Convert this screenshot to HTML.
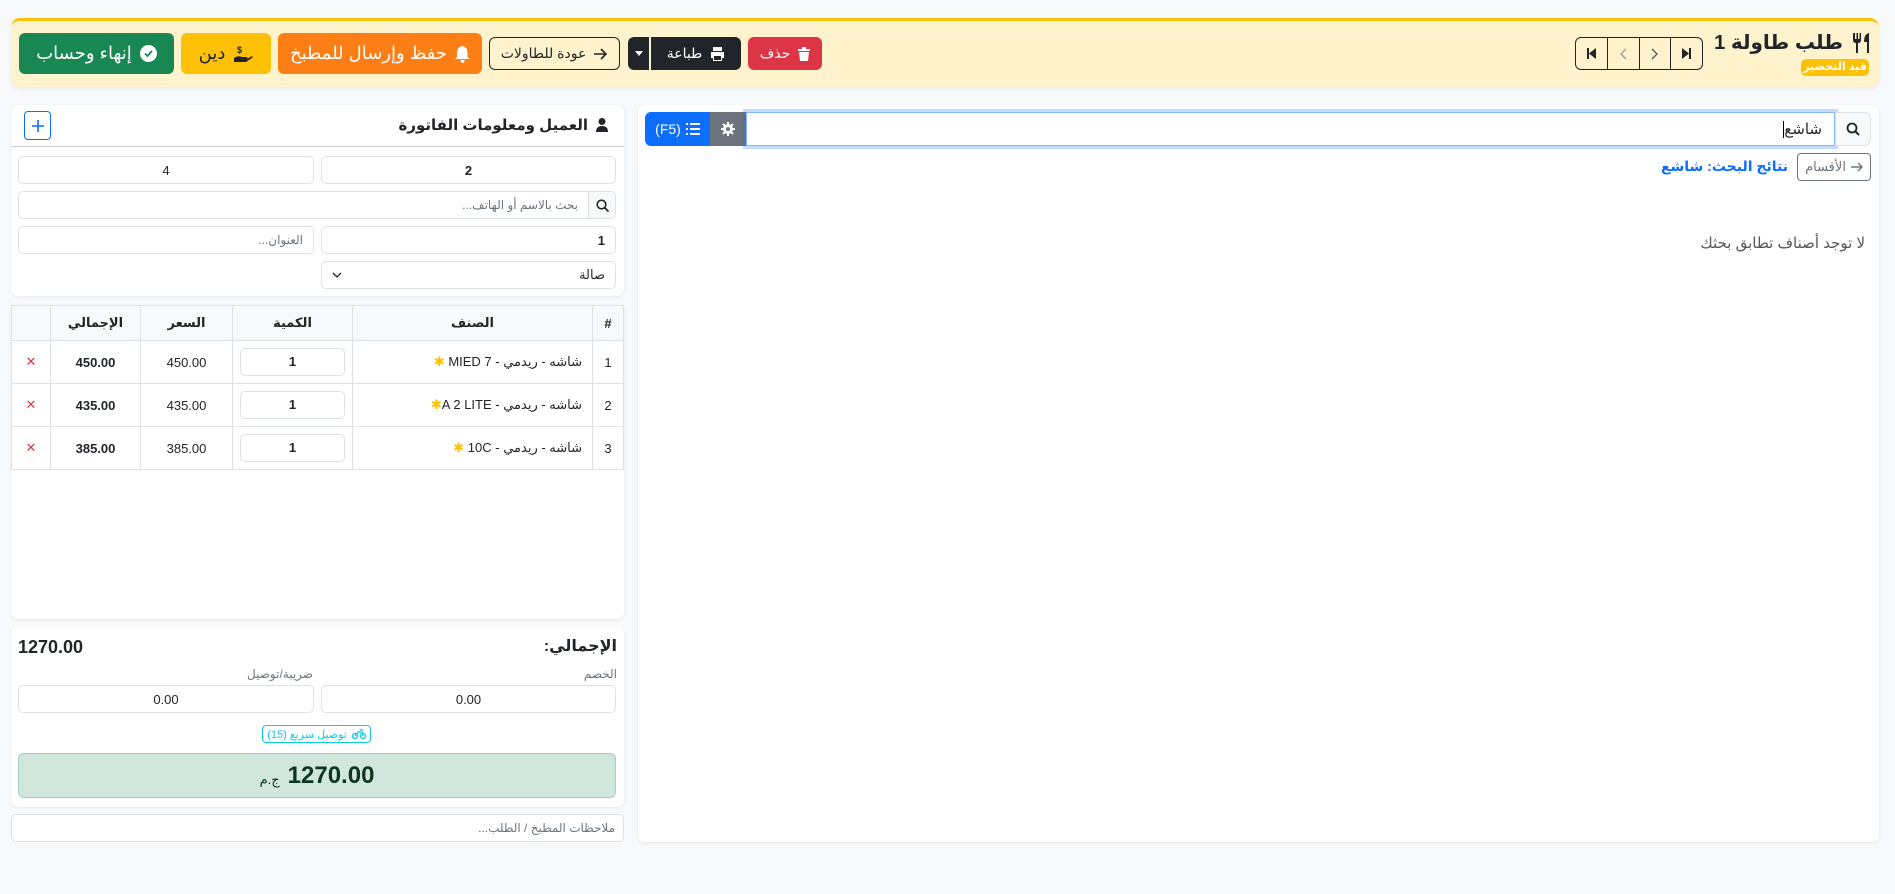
<!DOCTYPE html>
<html><head><meta charset="utf-8"><style>
*{box-sizing:border-box;margin:0;padding:0}
body{width:1895px;height:894px;background:#f8f9fa;font-family:"Liberation Sans","DejaVu Sans",sans-serif;color:#212529;position:relative;overflow:hidden}
.a{position:absolute}
.rtl{direction:rtl}
.btn{position:absolute;display:flex;align-items:center;justify-content:center;gap:8px;border-radius:6px;direction:rtl;white-space:nowrap}
.card{position:absolute;background:#fff;border-radius:7px;box-shadow:0 1px 3px rgba(0,0,0,.08)}
.inp{position:absolute;background:#fff;border:1px solid #dee2e6;border-radius:5px;font-size:13px;display:flex;align-items:center;padding:0 10px;direction:rtl}
table{border-collapse:collapse;position:absolute;left:11px;top:305px;width:613px;font-size:13px;direction:rtl}
td,th{border:1px solid #dee2e6;text-align:center}
th{background:#f8f9fa;height:35px;font-weight:bold}
td{height:43px}
.q{display:inline-block;width:105px;height:28px;border:1px solid #dee2e6;border-radius:5px;line-height:26px;font-weight:bold}
.star{color:#ffc107}
</style></head><body>

<div class="a" style="left:11px;top:18px;width:1868px;height:69px;background:#fff3cd;border-top:3px solid #ffc107;border-radius:9px;box-shadow:0 2px 4px rgba(0,0,0,.06)"></div>
<div class="a rtl" style="right:24px;top:30px;font-size:20px;font-weight:bold;display:flex;align-items:center;gap:8px">
<svg width="20" height="22" viewBox="0 0 20 22"><path d="M2 1v7q0 3 3 3v10h2V11q3 0 3-3V1H8.5v6H7V1H5.5v6H4V1z" fill="#212529"/><path d="M18 1q-5 1-5 9h3v11h2z" fill="#212529"/></svg>
<span>طلب طاولة 1</span></div>
<div class="a" style="left:1801px;top:59px;width:68px;height:17px;background:#ffc107;border-radius:5px;color:#fff;font-size:11px;font-weight:bold;text-align:center;line-height:17px;direction:rtl">قيد التحضير</div>

<div class="a" style="left:1575px;top:37px;width:128px;height:33px;border:1px solid #212529;border-radius:6px;display:flex;overflow:hidden">
<div style="flex:1;display:flex;align-items:center;justify-content:center;border-right:1px solid #212529"><svg width="10" height="11"><path d="M1 0h2v11H1zM10 0v11L3 5.5z" fill="#212529"/></svg></div>
<div style="flex:1;display:flex;align-items:center;justify-content:center;border-right:1px solid #212529;color:#999"><svg width="8" height="12"><path d="M7 1L2 6l5 5" stroke="#999" fill="none" stroke-width="1.3"/></svg></div>
<div style="flex:1;display:flex;align-items:center;justify-content:center;border-right:1px solid #212529"><svg width="8" height="12"><path d="M1 1l5 5-5 5" stroke="#555" fill="none" stroke-width="1.3"/></svg></div>
<div style="flex:1;display:flex;align-items:center;justify-content:center"><svg width="10" height="11"><path d="M7 0h2v11H7zM0 0v11L7 5.5z" fill="#212529"/></svg></div>
</div>

<div class="btn" style="left:19px;top:33px;width:155px;height:41px;background:#198754;color:#fff;font-size:18px">
<svg width="17" height="17"><circle cx="8.5" cy="8.5" r="8.5" fill="#fff"/><path d="M5 8.5l2.5 2.5 4.5-5" stroke="#198754" stroke-width="1.8" fill="none"/></svg><span>إنهاء وحساب</span></div>
<div class="btn" style="left:181px;top:33px;width:90px;height:41px;background:#ffc107;color:#212529;font-size:18px">
<svg width="20" height="18"><path d="M1 13q4-3 8-1h5q1 1 0 2H9h5l5-3q1 1 0 2l-6 4H1z" fill="#212529"/><text x="9" y="8" font-size="9" font-weight="bold" fill="#212529">$</text></svg><span>دين</span></div>
<div class="btn" style="left:278px;top:33px;width:204px;height:41px;background:#fd7e14;color:#fff;font-size:18px">
<svg width="15" height="18"><path d="M7.5 1q5 1 5 7v4l2 2H0l2-2V8q0-6 5.5-7zM5.5 15h4q0 3-2 3t-2-3z" fill="#fff"/></svg><span>حفظ وإرسال للمطبخ</span></div>
<div class="btn" style="left:489px;top:37px;width:131px;height:33px;border:1px solid #212529;background:transparent;font-size:14px">
<svg width="14" height="12"><path d="M0 6h12M7 1l5 5-5 5" stroke="#212529" stroke-width="1.6" fill="none"/></svg><span>عودة للطاولات</span></div>
<div class="btn" style="left:628px;top:37px;width:21px;height:33px;background:#212529;border-radius:6px 0 0 6px"><svg width="8" height="5"><path d="M0 0h8L4 5z" fill="#fff"/></svg></div>
<div class="btn" style="left:651px;top:37px;width:90px;height:33px;background:#212529;color:#fff;font-size:14px;border-radius:0 6px 6px 0">
<svg width="15" height="14"><path d="M3 0h9v4H3zM1 5h13v6h-2v3H3v-3H1zM4 9v4h7V9z" fill="#fff"/></svg><span>طباعة</span></div>
<div class="btn" style="left:748px;top:37px;width:74px;height:33px;background:#dc3545;color:#fff;font-size:14px">
<svg width="12" height="14"><path d="M0 2h12v2H0zM4 0h4v2H4zM1 5h10l-1 9H2z" fill="#fff"/></svg><span>حذف</span></div>

<div class="card" style="left:638px;top:105px;width:1241px;height:737px"></div>
<div class="a" style="left:645px;top:112px;width:65px;height:34px;background:#0d6efd;border-radius:6px 0 0 6px;color:#fff;font-size:14px;display:flex;align-items:center;justify-content:center;gap:5px">
<span>(F5)</span><svg width="14" height="12"><path d="M0 0h2v2H0zM4 0h10v2H4zM0 5h2v2H0zM4 5h10v2H4zM0 10h2v2H0zM4 10h10v2H4z" fill="#fff"/></svg></div>
<div class="a" style="left:710px;top:112px;width:36px;height:34px;background:#6c757d;display:flex;align-items:center;justify-content:center">
<svg width="14" height="14" viewBox="0 0 14 14"><circle cx="7" cy="7" r="5" fill="#fff"/><path d="M6 0h2v14H6zM0 6h14v2H0z" fill="#fff" transform="rotate(45 7 7)"/><path d="M6 0h2v14H6zM0 6h14v2H0z" fill="#fff"/><circle cx="7" cy="7" r="2" fill="#6c757d"/></svg></div>
<div class="a" style="left:746px;top:112px;width:1089px;height:34px;border:1px solid #86b7fe;box-shadow:0 0 0 3px rgba(13,110,253,.25);background:#fff;direction:rtl;font-size:15px;padding:7px 12px">شاشع<span style="border-left:1px solid #000;margin-left:1px"></span></div>
<div class="a" style="left:1835px;top:112px;width:36px;height:34px;border:1px solid #dee2e6;border-radius:0 6px 6px 0;background:#f8f9fa;display:flex;align-items:center;justify-content:center">
<svg width="14" height="14"><circle cx="6" cy="6" r="4.5" stroke="#212529" stroke-width="1.8" fill="none"/><path d="M9.5 9.5L13 13" stroke="#212529" stroke-width="2"/></svg></div>
<div class="btn" style="left:1797px;top:153px;width:74px;height:28px;border:1px solid #6c757d;color:#6c757d;font-size:13px;border-radius:4px;gap:5px">
<svg width="12" height="10"><path d="M0 5h11M7 1l4 4-4 4" stroke="#6c757d" stroke-width="1.4" fill="none"/></svg><span>الأقسام</span></div>
<div class="a rtl" style="right:107px;top:158px;font-size:14px;font-weight:bold;color:#0d6efd">نتائج البحث: شاشع</div>
<div class="a rtl" style="right:30px;top:234px;font-size:15px;color:#555">لا توجد أصناف تطابق بحثك</div>

<div class="card" style="left:11px;top:105px;width:613px;height:191px"></div>
<div class="a" style="left:11px;top:146px;width:613px;height:1px;background:#ccc"></div>
<div class="a rtl" style="right:1287px;top:116px;font-size:15px;font-weight:bold;display:flex;align-items:center;gap:8px">
<svg width="12" height="14"><circle cx="6" cy="3.5" r="3.5" fill="#212529"/><path d="M0 14q0-6 6-6t6 6z" fill="#212529"/></svg><span>العميل ومعلومات الفاتورة</span></div>
<div class="a" style="left:24px;top:111px;width:27px;height:29px;border:1px solid #0d6efd;border-radius:4px;display:flex;align-items:center;justify-content:center"><svg width="12" height="12"><path d="M6 0v12M0 6h12" stroke="#0d6efd" stroke-width="1.6"/></svg></div>
<div class="inp" style="left:18px;top:156px;width:296px;height:28px;justify-content:center">4</div>
<div class="inp" style="left:321px;top:156px;width:295px;height:28px;justify-content:center;font-weight:bold">2</div>
<div class="inp" style="left:18px;top:191px;width:571px;height:28px;color:#6c757d;font-size:12px;border-radius:5px 0 0 5px">بحث بالاسم أو الهاتف...</div>
<div class="a" style="left:588px;top:191px;width:28px;height:28px;border:1px solid #dee2e6;background:#f8f9fa;border-radius:0 5px 5px 0;display:flex;align-items:center;justify-content:center"><svg width="13" height="13"><circle cx="5.5" cy="5.5" r="4.3" stroke="#212529" stroke-width="1.6" fill="none"/><path d="M8.7 8.7L12.5 12.5" stroke="#212529" stroke-width="1.8"/></svg></div>
<div class="inp" style="left:18px;top:226px;width:296px;height:28px;color:#6c757d;font-size:12px">العنوان...</div>
<div class="inp" style="left:321px;top:226px;width:295px;height:28px;font-weight:bold">1</div>
<div class="inp" style="left:321px;top:261px;width:295px;height:28px;justify-content:space-between">صالة<svg width="10" height="6"><path d="M1 1l4 4 4-4" stroke="#212529" fill="none" stroke-width="1.3"/></svg></div>

<div class="card" style="left:11px;top:305px;width:613px;height:314px"></div>
<table>
<tr><th style="width:31px">#</th><th style="width:240px">الصنف</th><th style="width:120px">الكمية</th><th style="width:92px">السعر</th><th style="width:90px">الإجمالي</th><th></th></tr>
<tr><td>1</td><td style="text-align:right;padding-right:10px">شاشه - ريدمي - MIED 7 <span class="star">✱</span></td><td><span class="q">1</span></td><td>450.00</td><td style="font-weight:bold">450.00</td><td style="color:#dc3545">✕</td></tr>
<tr><td>2</td><td style="text-align:right;padding-right:10px">شاشه - ريدمي - A 2 LITE<span class="star">✱</span></td><td><span class="q">1</span></td><td>435.00</td><td style="font-weight:bold">435.00</td><td style="color:#dc3545">✕</td></tr>
<tr><td>3</td><td style="text-align:right;padding-right:10px">شاشه - ريدمي - 10C <span class="star">✱</span></td><td><span class="q">1</span></td><td>385.00</td><td style="font-weight:bold">385.00</td><td style="color:#dc3545">✕</td></tr>
</table>

<div class="card" style="left:11px;top:627px;width:613px;height:180px"></div>
<div class="a rtl" style="right:1278px;top:636px;font-size:16px;font-weight:bold">الإجمالي:</div>
<div class="a" style="left:18px;top:637px;font-size:18px;font-weight:bold">1270.00</div>
<div class="a rtl" style="right:1278px;top:667px;font-size:12px;color:#6c757d">الخصم</div>
<div class="a rtl" style="right:1582px;top:667px;font-size:12px;color:#6c757d">ضريبة/توصيل</div>
<div class="inp" style="left:18px;top:685px;width:296px;height:28px;justify-content:center">0.00</div>
<div class="inp" style="left:321px;top:685px;width:295px;height:28px;justify-content:center">0.00</div>
<div class="btn" style="left:262px;top:725px;width:109px;height:18px;border:1px solid #0dcaf0;color:#0dcaf0;font-size:11px;border-radius:4px;gap:5px">
<svg width="14" height="10"><circle cx="3" cy="7" r="2.5" stroke="#0dcaf0" fill="none" stroke-width="1.3"/><circle cx="11" cy="7" r="2.5" stroke="#0dcaf0" fill="none" stroke-width="1.3"/><path d="M3 7l3-4h4l1 4M8 1h3" stroke="#0dcaf0" fill="none" stroke-width="1.3"/></svg><span>توصيل سريع (15)</span></div>
<div class="a" style="left:18px;top:753px;width:598px;height:45px;background:#d1e7dd;border:1px solid #a3cfbb;border-radius:6px;display:flex;align-items:center;justify-content:center;gap:8px;direction:rtl">
<span style="font-size:24px;font-weight:bold;color:#0a3622">1270.00</span><span style="font-size:13px;color:#0a3622;margin-top:8px">ج.م</span></div>

<div class="a rtl" style="left:11px;top:814px;width:613px;height:28px;background:#fff;border:1px solid #dee2e6;border-radius:5px;font-size:12px;color:#6c757d;padding:6px 8px">ملاحظات المطبخ / الطلب...</div>
</body></html>
